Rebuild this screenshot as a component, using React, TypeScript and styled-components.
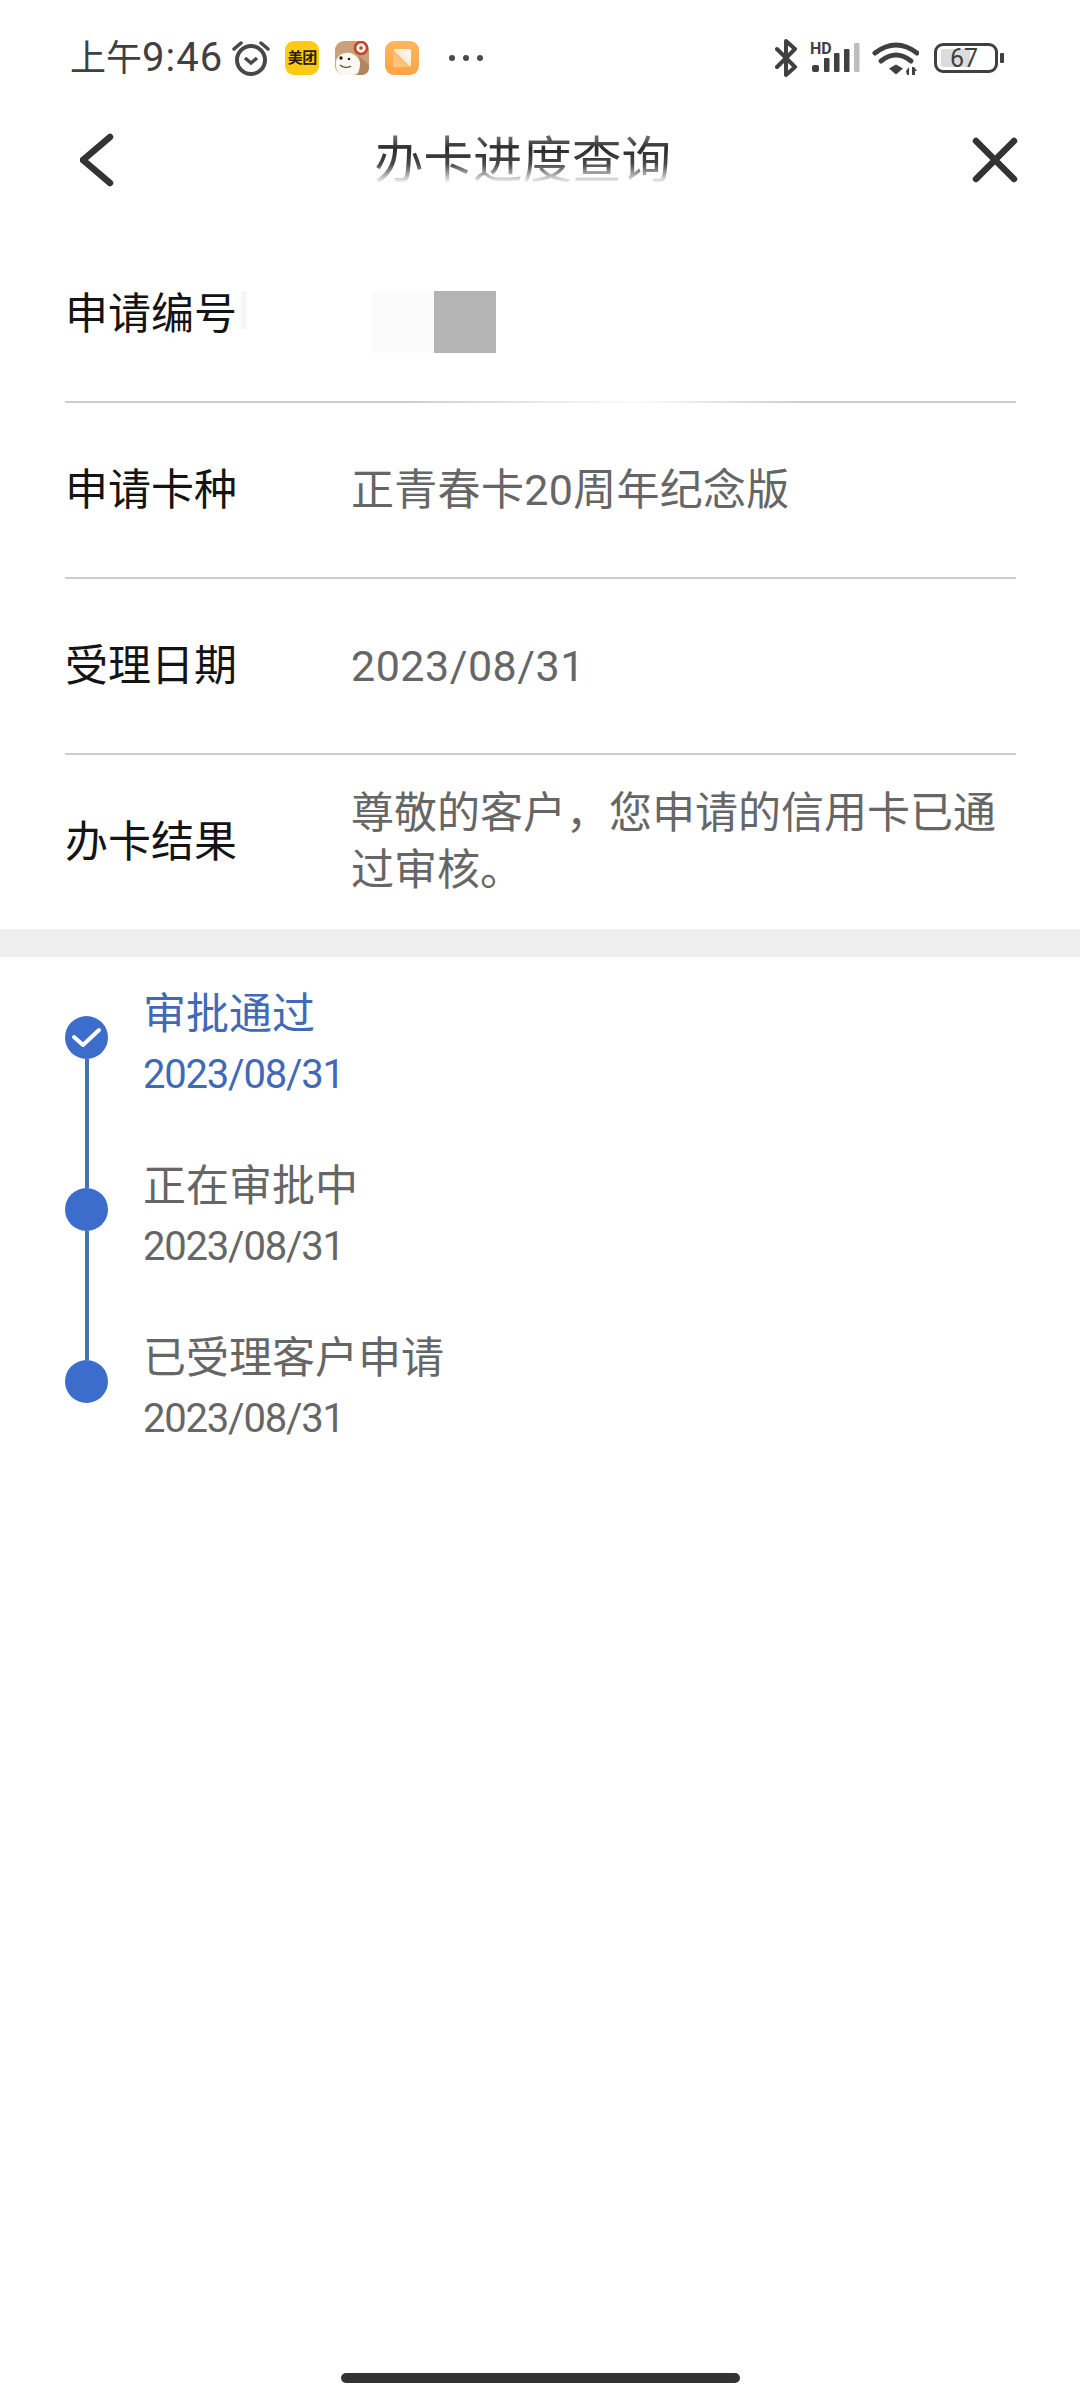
import React from 'react';
import styled, {createGlobalStyle} from 'styled-components';

const GlobalStyle = createGlobalStyle`
  html, body {
    margin: 0;
    padding: 0;
    background: #ffffff;
  }
  * {
    box-sizing: border-box;
  }
`

const Page = styled.div`
  display: flex;
  flex-direction: column;
  width: 1080px;
  height: 2400px;
  background: #ffffff;
  font-family: Roboto, "Noto Sans CJK SC", sans-serif;
  overflow: hidden;
`

const StatusBar = styled.div`
  display: flex;
  align-items: center;
  justify-content: space-between;
  height: 110px;
  padding: 6px 76px 0 70px;
`

const StatusGroup = styled.div`
  display: flex;
  align-items: center;
`

const StatusTime = styled.span`
  font-size: 36px;
  line-height: 44px;
  color: #404040;
  margin-right: 9px;
`

const StatusDigits = styled.span`
  font-size: 40px;
  letter-spacing: 1px;
`

const AppBadge = styled.span`
  display: flex;
  align-items: center;
  justify-content: center;
  width: 34px;
  height: 34px;
  margin-left: 15px;
  border-radius: 9px;
  background: #ffcb12;
  color: #2a1c08;
  font-size: 15px;
  font-weight: 700;
  line-height: 34px;
  letter-spacing: -0.5px;
`

const AppIcon = styled.svg`
  display: block;
  margin-left: 16px;
`

const MoreDots = styled.span`
  display: flex;
  gap: 8px;
  margin-left: 30px;

  i {
    width: 6px;
    height: 6px;
    border-radius: 50%;
    background: #4a4a4a;
  }
`

const Battery = styled.div`
  display: flex;
  align-items: center;
  margin-left: 15px;
`

const BatteryBody = styled.div`
  position: relative;
  display: flex;
  align-items: center;
  justify-content: center;
  width: 64px;
  height: 30px;
  padding-right: 4px;
  border: 3.5px solid #404040;
  border-radius: 9px;
  color: #404040;
  font-size: 25px;
  line-height: 23px;
`

const BatteryFill = styled.span`
  position: absolute;
  left: 4px;
  top: 3px;
  bottom: 3px;
  border-radius: 2px;
  background: #dcdcdc;
`

const BatteryValue = styled.span`
  position: relative;
`

const BatteryNub = styled.span`
  width: 4px;
  height: 10px;
  margin-left: 2px;
  border-radius: 1px;
  background: #404040;
`

const Header = styled.div`
  display: flex;
  align-items: center;
  height: 100px;
  padding: 0 62px 0 80px;
`

const Title = styled.div`
  margin: 2px 0 0 258px;
  font-size: 49.5px;
  line-height: 64px;
  color: #2a2a2a;
  -webkit-mask-image: linear-gradient(to bottom, rgba(0, 0, 0, 0.7) 14%, #000 30%, rgba(0, 0, 0, 0.85) 55%, rgba(0, 0, 0, 0.2) 78%, transparent 86%);
  mask-image: linear-gradient(to bottom, rgba(0, 0, 0, 0.7) 14%, #000 30%, rgba(0, 0, 0, 0.85) 55%, rgba(0, 0, 0, 0.2) 78%, transparent 86%);
`

const CloseIcon = styled.svg`
  margin-left: auto;
`

const InfoList = styled.div`
  margin-top: 17px;
  padding: 0 64px 0 65px;
`

const InfoRow = styled.div<{$fade?: boolean; $last?: boolean}>`
  display: grid;
  grid-template-columns: 286px 1fr;
  align-items: center;
  height: ${p => (p.$last ? '174px' : '176px')};
  border-bottom: ${p => (p.$last ? '0' : '2px solid transparent')};
  border-image: ${p => (p.$last
    ? 'none'
    : p.$fade
      ? 'linear-gradient(to right, #cccccc 35%, #fbfbfb 60%, #cccccc 78%) 1'
      : 'linear-gradient(to right, #cccccc, #cccccc) 1')};
`

const InfoLabel = styled.div<{$smudge?: boolean}>`
  position: relative;
  font-size: 43px;
  line-height: 56px;
  color: #141414;

  &::after {
    content: ${p => (p.$smudge ? '""' : 'none')};
    position: absolute;
    left: 172px;
    top: 5px;
    width: 11px;
    height: 38px;
    background: linear-gradient(to right, #ffffff, #f4f4f4 70%, #ffffff);
  }
`

const InfoValue = styled.div<{$tracking?: number}>`
  font-size: 43px;
  line-height: 57px;
  letter-spacing: ${p => p.$tracking ?? 0}px;
  color: #666666;
`

const Redacted = styled.div`
  display: flex;
  height: 62px;
  margin: 16px 0 0 21px;
`

const RedactedBlock = styled.span<{$tone: string}>`
  width: 62px;
  background: ${p => p.$tone};
`

const SectionGap = styled.div`
  height: 28px;
  background: #efefef;
`

const Timeline = styled.div`
  padding: 28px 0 0 65px;
`

const Step = styled.div`
  display: grid;
  grid-template-columns: 78px 1fr;
  height: 172px;
`

const Rail = styled.div`
  display: flex;
  flex-direction: column;
  align-items: center;
  width: 43px;
  margin: 31px 0 -31px;
`

const Dot = styled.div`
  flex: none;
  width: 43px;
  height: 43px;
  border-radius: 50%;
  background: #3c6dcd;
`

const Connector = styled.div`
  flex: 1;
  width: 4px;
  background: #4a70b4;
`

const StepTitle = styled.div<{$active?: boolean}>`
  padding-top: 3px;
  font-size: 43px;
  line-height: 52px;
  margin-bottom: 10px;
  color: ${p => (p.$active ? '#4169b5' : '#666666')};
`

const StepDate = styled.div<{$active?: boolean}>`
  font-size: 40px;
  line-height: 50px;
  letter-spacing: -1.2px;
  color: ${p => (p.$active ? '#4169b5' : '#666666')};
`

const HomeBar = styled.div`
  align-self: center;
  width: 399px;
  height: 10px;
  margin-top: auto;
  margin-bottom: 17px;
  border-radius: 5px;
  background: #333333;
`

const AlarmIcon = () => (
    <svg width="38" height="38" viewBox="0 0 38 38" fill="none" stroke="#484848">
        <circle cx="19" cy="21" r="14" strokeWidth="4" />
        <path d="M13 19l6 5 6-5" strokeWidth="3.5" />
        <path d="M2 10l7-6M36 10l-7-6" strokeWidth="3.5" strokeLinecap="round" />
    </svg>
)

const DogIcon = () => (
    <AppIcon width="34" height="34" viewBox="0 0 34 34">
        <rect width="34" height="34" rx="9" fill="#c9a07c" />
        <path d="M1 20C3 12 12 10 18 13c5 3 8 8 8 13 0 5-4 8-9 8H8c-5 0-8-7-7-14z" fill="#fbf8f2" />
        <path d="M24 15l10 9v3c0 4-3 7-7 7h-5c3-5 4-12 2-19z" fill="#b08660" />
        <circle cx="26" cy="7" r="6" fill="#f4efe6" stroke="#c8402a" strokeWidth="2.5" />
        <circle cx="26" cy="7" r="1.8" fill="#c8402a" />
        <circle cx="6" cy="17" r="1.7" fill="#222222" />
        <circle cx="14" cy="18" r="1.3" fill="#222222" />
        <path d="M5 24c3 3 8 3 11 1" stroke="#555555" strokeWidth="1.4" fill="none" />
    </AppIcon>
)

const NoteIcon = () => (
    <AppIcon width="34" height="34" viewBox="0 0 34 34">
        <defs>
            <linearGradient id="noteBg" x1="0" y1="0" x2="0" y2="1">
                <stop offset="0" stopColor="#ffb65c" />
                <stop offset="1" stopColor="#fca444" />
            </linearGradient>
            <linearGradient id="notePaper" x1="1" y1="0" x2="0" y2="1">
                <stop offset="0" stopColor="#ffffff" />
                <stop offset="0.5" stopColor="#fdeacf" />
                <stop offset="0.52" stopColor="#ffbf72" />
                <stop offset="1" stopColor="#ffc685" />
            </linearGradient>
        </defs>
        <rect width="34" height="34" rx="9" fill="url(#noteBg)" />
        <rect x="8" y="8" width="18" height="18" rx="2" fill="url(#notePaper)" />
    </AppIcon>
)

const BluetoothIcon = () => (
    <svg width="25" height="38" viewBox="0 0 25 38" fill="none" stroke="#404040" strokeWidth="4" strokeLinejoin="round" strokeLinecap="round">
        <path d="M3 10l18 18-9 8V2l9 8L3 28" />
    </svg>
)

const SignalIcon = () => (
    <svg width="51" height="32" viewBox="0 0 51 32" style={{marginLeft: 11}}>
        <text x="0" y="11.5" fontSize="16" fontWeight="700" fontFamily="Roboto, sans-serif" fill="#404040">HD</text>
        <rect x="2" y="23" width="7" height="7" rx="2" fill="#404040" />
        <rect x="14" y="16" width="5.5" height="14" rx="1" fill="#404040" />
        <rect x="24" y="11" width="5.5" height="19" rx="1" fill="#404040" />
        <rect x="34" y="7" width="5.5" height="23" rx="1" fill="#404040" />
        <rect x="44" y="1" width="5.5" height="29" rx="1" fill="#bdbdbd" />
    </svg>
)

const WifiIcon = () => (
    <svg width="47" height="35" viewBox="0 0 47 35" fill="none" style={{marginLeft: 11}}>
        <path d="M3 12Q24-4 45 12" stroke="#404040" strokeWidth="5" strokeLinecap="round" />
        <path d="M9 20Q24 8 39 20" stroke="#404040" strokeWidth="5" strokeLinecap="round" />
        <path d="M17 27.5l7-4 7 4-7 6z" fill="#404040" />
        <path d="M34 30l3-4v8h-2zM40 26h2l3 4h-2v4h-3z" fill="#404040" />
    </svg>
)

const ChevronIcon = () => (
    <svg width="36" height="56" viewBox="0 0 36 56" fill="none" stroke="#333333" strokeWidth="6.5" strokeLinecap="round" strokeLinejoin="miter">
        <path d="M30 5L3 28l27 23" />
    </svg>
)

const CheckMark = () => (
    <svg width="43" height="43" viewBox="0 0 43 43" fill="none" stroke="#ffffff" strokeWidth="4" strokeLinecap="round" strokeLinejoin="round">
        <path d="M9 21l9 8 16-15" />
    </svg>
)

interface InfoItem {
    label: string
    value: string
    tracking: number
}

const infoItems: InfoItem[] = [
    {label: '申请卡种', value: '正青春卡20周年纪念版', tracking: 0.3},
    {label: '受理日期', value: '2023/08/31', tracking: 0.5},
]

const steps = [
    {title: '审批通过', date: '2023/08/31', active: true},
    {title: '正在审批中', date: '2023/08/31', active: false},
    {title: '已受理客户申请', date: '2023/08/31', active: false},
]

const App = () => {
    const batteryLevel = 67

    return (
        <Page>
            <GlobalStyle />
            <StatusBar>
                <StatusGroup>
                    <StatusTime>上午<StatusDigits>9:46</StatusDigits></StatusTime>
                    <AlarmIcon />
                    <AppBadge>美团</AppBadge>
                    <DogIcon />
                    <NoteIcon />
                    <MoreDots><i /><i /><i /></MoreDots>
                </StatusGroup>
                <StatusGroup>
                    <BluetoothIcon />
                    <SignalIcon />
                    <WifiIcon />
                    <Battery>
                        <BatteryBody>
                            <BatteryFill style={{width: `${batteryLevel * 0.75}%`}} />
                            <BatteryValue>{batteryLevel}</BatteryValue>
                        </BatteryBody>
                        <BatteryNub />
                    </Battery>
                </StatusGroup>
            </StatusBar>

            <Header>
                <ChevronIcon />
                <Title>办卡进度查询</Title>
                <CloseIcon width="46" height="46" viewBox="0 0 46 46" fill="none" stroke="#333333" strokeWidth="6.5" strokeLinecap="round">
                    <path d="M4 4l38 38M42 4L4 42" />
                </CloseIcon>
            </Header>

            <InfoList>
                <InfoRow $fade>
                    <InfoLabel $smudge>申请编号</InfoLabel>
                    <Redacted>
                        <RedactedBlock $tone="#fbfbfb" />
                        <RedactedBlock $tone="#b4b4b4" />
                    </Redacted>
                </InfoRow>
                {infoItems.map(item => (
                    <InfoRow key={item.label}>
                        <InfoLabel>{item.label}</InfoLabel>
                        <InfoValue $tracking={item.tracking}>{item.value}</InfoValue>
                    </InfoRow>
                ))}
                <InfoRow $last>
                    <InfoLabel>办卡结果</InfoLabel>
                    <InfoValue>尊敬的客户，您申请的信用卡已通过审核。</InfoValue>
                </InfoRow>
            </InfoList>

            <SectionGap />

            <Timeline>
                {steps.map((step, index) => (
                    <Step key={step.title}>
                        <Rail>
                            <Dot>{step.active && <CheckMark />}</Dot>
                            {index < steps.length - 1 && <Connector />}
                        </Rail>
                        <div>
                            <StepTitle $active={step.active}>{step.title}</StepTitle>
                            <StepDate $active={step.active}>{step.date}</StepDate>
                        </div>
                    </Step>
                ))}
            </Timeline>

            <HomeBar />
        </Page>
    );
};

export default App;
